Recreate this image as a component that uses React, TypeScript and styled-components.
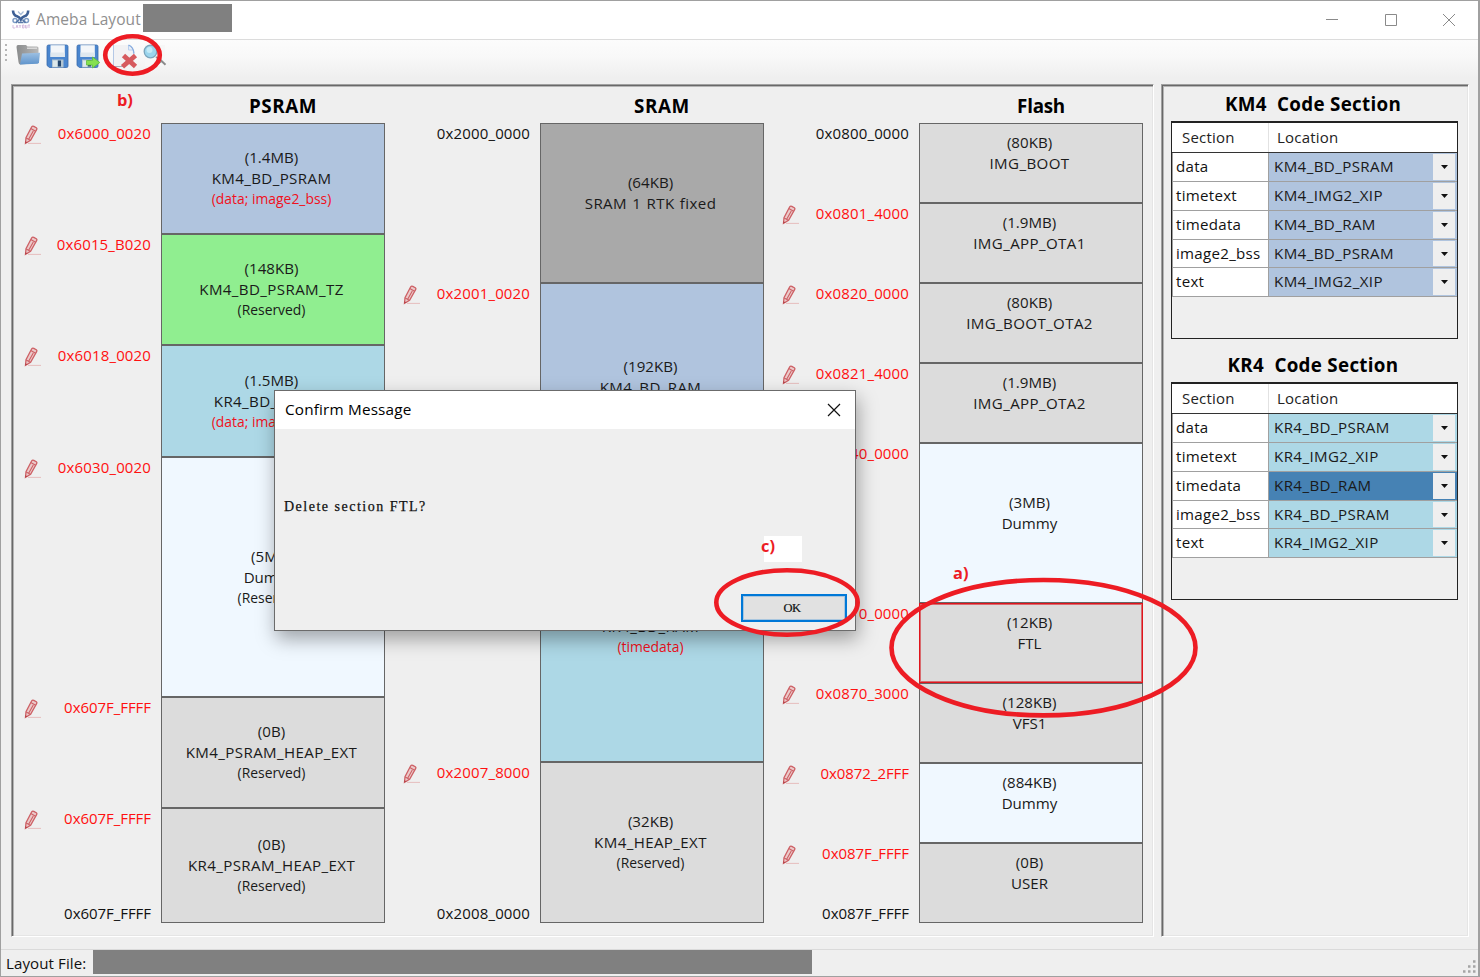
import React from 'react';
import styled, { createGlobalStyle } from 'styled-components';

const Global = createGlobalStyle`
  html, body { margin: 0; padding: 0; overflow: hidden; }
  * { box-sizing: border-box; }
  body { font-family: "Open Sans", "Noto Sans", sans-serif; color: #111; background: #efefef; }
`;

const Window = styled.div`
  position: relative;
  width: 1480px;
  height: 977px;
  display: flex;
  flex-direction: column;
  background: #efefef;
  border: 1px solid #a0a0a0;
  border-right-width: 2px;
  overflow: hidden;
`;

const TitleBar = styled.header`
  height: 38px;
  flex: none;
  display: flex;
  align-items: center;
  background: #fff;
  padding: 0 0 2px 10px;
`;

const AppTitle = styled.span`
  width: 107px;
  margin-left: 5px;
  font-size: 15.5px;
  letter-spacing: 0.08px;
  color: #8f8f8f;
  white-space: nowrap;
`;

const TitleMask = styled.div`
  width: 89px;
  height: 28px;
  margin-top: -2px;
  background: #808080;
`;

const WindowButtons = styled.div`
  margin: 2px 22px 0 auto;
  display: flex;
  gap: 44.5px;
`;

const ToolBar = styled.div`
  height: 45px;
  flex: none;
  display: flex;
  align-items: flex-start;
  padding: 4px 0 0 4px;
  border-top: 1px solid #dcdcdc;
  background: linear-gradient(#fcfcfc, #f8f8f8 40%, #efefef 85%);
`;

const Tool = styled.span<{ $gap: number }>`
  display: flex;
  margin-left: ${(p) => p.$gap}px;
`;

const Main = styled.main`
  flex: none;
  height: 853px;
  display: flex;
  gap: 7px;
  padding-left: 10px;
`;

const Panel = styled.section<{ $w: number }>`
  width: ${(p) => p.$w}px;
  flex: none;
  border: 1px solid;
  border-color: #a0a0a0 #fff #fff #a0a0a0;
  box-shadow: inset 1px 1px 0 #696969, inset 2px 2px 0 #b5b5b5, inset -1px -1px 0 #e5e5e5;
`;

const MemoryPanel = styled(Panel)`
  display: flex;
  gap: 7px;
  padding-left: 1px;
`;

const Column = styled.div`
  width: 372px;
  flex: none;
  display: flex;
  flex-direction: column;
`;

const ColumnTitle = styled.h2<{ $spacing: number }>`
  margin: 0;
  height: 38px;
  padding: 8px 0 0 168px;
  text-align: center;
  font-size: 18.8px;
  letter-spacing: ${(p) => p.$spacing}px;
  line-height: 26px;
  font-weight: 700;
  color: #000;
  white-space: nowrap;
`;

const MemRow = styled.div<{ $h: number }>`
  height: ${(p) => p.$h}px;
  display: flex;
`;

const Side = styled.div`
  width: 148px;
  padding-right: 10px;
  display: flex;
  flex-direction: column;
  justify-content: space-between;
`;

const Address = styled.div<{ $red: boolean; $tight: boolean }>`
  height: 20px;
  display: flex;
  justify-content: flex-end;
  align-items: center;
  font-size: 15px;
  line-height: 20px;
  letter-spacing: ${(p) => (p.$tight ? -0.05 : 0.14)}px;
  color: ${(p) => (p.$red ? '#ff1010' : '#111')};
  white-space: nowrap;
  & > svg { margin: 4px auto 0 11px; }
`;

const Block = styled.div<{ $c: string; $sel: boolean }>`
  width: 224px;
  background: ${(p) => p.$c};
  border: 1px solid ${(p) => (p.$sel ? '#e0141c' : '#666')};
  box-shadow: ${(p) => (p.$sel ? 'inset 0 0 0 1px #d86a6e' : 'none')};
  display: flex;
  flex-direction: column;
  align-items: center;
  justify-content: center;
  padding-right: 3px;
`;

const BlockLine = styled.div<{ $small?: boolean; $red?: boolean; $wide?: boolean }>`
  height: 21px;
  flex: none;
  line-height: ${(p) => (p.$small ? 19 : 21)}px;
  font-size: ${(p) => (p.$small ? 13.9 : 15.1)}px;
  letter-spacing: ${(p) => (p.$wide ? 0.38 : 0)}px;
  word-spacing: ${(p) => (p.$wide ? 1 : 0)}px;
  color: ${(p) => (p.$red ? '#f01020' : '#1a1a1a')};
  white-space: nowrap;
`;

const CodePanel = styled(Panel)`
  padding: 5px 10px 0 9px;
`;

const CodeTitle = styled.h3`
  margin: 0;
  height: 31px;
  padding: 1px 3px 0 0;
  text-align: center;
  font-size: 18.8px;
  letter-spacing: 0.3px;
  line-height: 26px;
  font-weight: 700;
  color: #000;
  white-space: pre;
`;

const Table = styled.div`
  height: 218px;
  margin-bottom: 12px;
  border: 1px solid #222;
  border-top-width: 2px;
`;

const HeadRow = styled.div`
  display: grid;
  grid-template-columns: 97px 1fr;
  height: 30px;
  background: #fff;
  border-bottom: 1px solid #333;
`;

const HeadCell = styled.div`
  padding-left: 10px;
  font-size: 15px;
  letter-spacing: 0.2px;
  line-height: 28px;
  color: #222;
  & + & { margin-left: -1px; border-left: 1px solid #e2e2e2; padding-left: 8px; }
`;

const BodyRow = styled.div`
  display: grid;
  grid-template-columns: 97px 1fr;
  height: 29px;
  &:nth-child(5) { height: 28px; }
`;

const NameCell = styled.div`
  background: #fff;
  border: 1px solid #a0a0a0;
  border-width: 0 1px 1px 1px;
  padding-left: 3px;
  font-size: 15.1px;
  letter-spacing: 0.28px;
  line-height: 27px;
  color: #111;
  white-space: nowrap;
`;

const SelectCell = styled.div<{ $c: string }>`
  display: flex;
  justify-content: space-between;
  background: ${(p) => p.$c};
  border-bottom: 1px solid #a0a0a0;
  padding: 1px 2px 1px 5px;
  font-size: 15.1px;
  letter-spacing: 0.4px;
  line-height: 25px;
  color: #1a1a1a;
`;

const Drop = styled.span`
  width: 22px;
  display: flex;
  align-items: center;
  justify-content: center;
  background: #efefef;
`;

const StatusBar = styled.footer`
  height: 27px;
  margin-top: auto;
  flex: none;
  display: flex;
  border-top: 1px solid #dadada;
  padding-left: 5px;
`;

const StatusLabel = styled.span`
  width: 87px;
  font-size: 15.1px;
  letter-spacing: 0.08px;
  line-height: 27px;
  color: #111;
  white-space: nowrap;
`;

const StatusMask = styled.div`
  width: 719px;
  height: 24px;
  background: #808080;
`;

const Grip = styled.svg`
  margin: 10px 1px 0 auto;
`;

const Dialog = styled.div`
  position: absolute;
  left: 273px;
  top: 389px;
  width: 582px;
  height: 241px;
  display: flex;
  flex-direction: column;
  background: #efefef;
  border: 1px solid #6b6b6b;
  box-shadow: 2px 8px 18px rgba(0, 0, 0, 0.34);
`;

const DialogHead = styled.div`
  height: 38px;
  display: flex;
  align-items: center;
  justify-content: space-between;
  padding: 0 14px 0 10px;
  background: #fff;
  color: #000;
  font-size: 15.3px;
  letter-spacing: 0.17px;
  line-height: 36px;
`;

const DialogHeadText = styled.span`
  margin-top: -2px;
`;

const DialogText = styled.p`
  margin: 0;
  padding: 69px 0 0 9px;
  font-family: "Liberation Serif", serif;
  font-size: 14px;
  letter-spacing: 1.5px;
  line-height: 18px;
  color: #111;
  -webkit-text-stroke: 0.25px #111;
`;

const OkButton = styled.button`
  width: 106px;
  height: 28px;
  margin: auto 8px 8px auto;
  padding: 0 4px 0 0;
  border: 2px solid #0078d7;
  box-shadow: inset 0 0 0 1px #a9c6de;
  background: #e1e1e1;
  font-family: "Liberation Serif", serif;
  font-size: 12.5px;
  letter-spacing: -0.5px;
  color: #111;
  -webkit-text-stroke: 0.2px #111;
`;

const Marks = styled.svg`
  position: absolute;
  left: -1px;
  top: -1px;
`;

const Mark = styled.span<{ $x: number; $y: number }>`
  position: absolute;
  left: ${(p) => p.$x}px;
  top: ${(p) => p.$y}px;
  font-size: 16.4px;
  line-height: 20px;
  font-weight: 700;
  color: #ed1c24;
`;

const Patch = styled.div`
  position: absolute;
  left: 763px;
  top: 535px;
  width: 38px;
  height: 26px;
  background: #fff;
`;

const Pencil = () => (
  <svg width="18" height="20" viewBox="0 0 18 20" fill="none">
    <path d="M1.5 18.3L2 12.8L7.7 1.8Q8.5 .8 9.8 1.4L12.3 2.8Q13.3 3.5 12.6 4.6L6.6 15.3L1.5 18.3Z" stroke="#cd6065" strokeWidth="1.3" fill="#ebcaca" />
    <path d="M6.8 3.6L11.6 6.2M2.2 13L6.3 15.2M9.3 6L4.8 14" stroke="#cd6065" strokeWidth="1.1" />
    <path d="M1.2 16.2L1.2 18.6L3.6 17.6Z" fill="#b5444a" />
    <path d="M4 18.4H17" stroke="#e6bdbd" />
  </svg>
);

const Logo = () => (
  <svg width="20" height="21" viewBox="0 0 20 21" fill="none">
    <path d="M2 1.5Q2.3 6.5 6 7.2Q8.5 8 9.8 10.5Q11 8 13.5 7.2Q17 6.5 17.2 1.5" stroke="#3d5f95" strokeWidth="2.6" />
    <path d="M7 2.5L9.8 5.5L12.5 2.5" stroke="#a9bdd8" strokeWidth="1.2" />
    <circle cx="4" cy="11.5" r="2" stroke="#7f9dc6" strokeWidth="1.5" />
    <circle cx="15.5" cy="11.5" r="2" stroke="#7f9dc6" strokeWidth="1.5" />
    <path d="M5 14L8 10.5M14.5 14L11.5 10.5M7 13.5H12.5" stroke="#5878a8" strokeWidth="1.6" />
    <path d="M2 16V19H4M5 19L6 16L7 19M8 16L9 17.5L10 16M9 17.5V19M11.5 16H13V19H11.5ZM14.5 16V19H16V16M17 16H19M18 16V19" stroke="#d3b7dc" strokeWidth=".9" />
  </svg>
);

const Folder = () => (
  <svg width="26" height="24" viewBox="0 0 26 24">
    <defs>
      <linearGradient id="fold" x2="0" y2="1"><stop stopColor="#9dc0e2" /><stop offset="1" stopColor="#5f94cc" /></linearGradient>
      <linearGradient id="foldBack" x2="1"><stop stopColor="#8a8c8d" /><stop offset="1" stopColor="#b8b8b8" /></linearGradient>
    </defs>
    <path d="M.5 3Q.5 1 2 1H10L11.5 2.5H21Q22.5 2.5 22.5 4V19L4 20.5Q2.8 20 2.5 18Z" fill="url(#foldBack)" />
    <path d="M11 3.5H21V5H11Z" fill="#d8d8d8" />
    <path d="M6 9.5L24 8.7L23 18.3Q22.8 19.6 21.5 19.7L4 20.5Z" fill="url(#fold)" />
  </svg>
);

const Disk = ({ arrow }: { arrow?: boolean }) => (
  <svg width="24" height="26" viewBox="0 0 24 26">
    <path d="M2.5 1H20.5Q22 1 22 2.5V22Q22 23.5 20.5 23.5H3.5L1 21.5V2.5Q1 1 2.5 1Z" fill="#4a86cf" stroke="#3a69a8" strokeWidth=".8" />
    <path d="M4.5 1.2H18.8V13H4.5Z" fill="#f3f6f9" />
    <path d="M4.5 8.5H18.8V13H4.5Z" fill="#dfe8ef" />
    <path d="M6 15.5H17.5V23.4H6Z" fill="#b3c5d1" />
    <path d="M12 16.5H15V22.5H12Z" fill="#24466d" />
    <path d="M7 16.5H11V22.8H7Z" fill="#dde8ea" />
    {arrow && <path d="M10.5 16.5H16.5V13L23.8 18.5L16.5 24V21H10.5Z" fill="#86e04f" stroke="#5fbe3e" strokeWidth=".8" />}
  </svg>
);

const PageDelete = () => (
  <svg width="26" height="26" viewBox="0 0 26 26" fill="none">
    <path d="M1 1H16.5L21.5 6.5V22.5H1Z" fill="#f2f2f4" />
    <path d="M.5 1V22.5" stroke="#b4c8e6" />
    <path d="M15.5 1V6H20.5V10" fill="#e4eefa" stroke="#b9cfee" strokeWidth="1" />
    <path d="M15.5 1Q20.5 3 21 9.5" stroke="#86abdf" strokeWidth="1.3" />
    <path d="M.5 22.5H12" stroke="#a7adba" />
    <path d="M10.5 11.5L22.5 22.5M22.5 11.5L9.5 22.8" stroke="#d65a5e" strokeWidth="4.8" />
  </svg>
);

const Search = () => (
  <svg width="24" height="24" viewBox="0 0 24 24" fill="none">
    <path d="M2 1H22V22H2Z" fill="#f7f7f7" />
    <path d="M13 13L17 15.5L22.5 20.8" stroke="#8b8b8b" strokeWidth="2" />
    <path d="M15 20L19 17" stroke="#8b8b8b" strokeWidth="1.3" />
    <circle cx="7.5" cy="7.5" r="6.3" fill="#9bd5ed" stroke="#7aa5bc" strokeWidth="1.3" />
    <circle cx="6.5" cy="6" r="3" fill="#c4eaf6" />
  </svg>
);

type Mem = { h: number; addr: string; black?: boolean; size: string; name: string; note?: string; noteRed?: boolean; c: string; sel?: boolean; end?: string };

const STEEL = '#b0c4de';
const CYAN = '#add8e6';
const GRAY = '#dcdcdc';
const ICE = '#f0f8ff';

const columns: { title: string; spacing: number; rows: Mem[] }[] = [
  {
    title: 'PSRAM',
    spacing: 0.6,
    rows: [
      { h: 111, addr: '0x6000_0020', size: '(1.4MB)', name: 'KM4_BD_PSRAM', note: '(data; image2_bss)', noteRed: true, c: STEEL },
      { h: 111, addr: '0x6015_B020', size: '(148KB)', name: 'KM4_BD_PSRAM_TZ', note: '(Reserved)', c: '#90ee90' },
      { h: 112, addr: '0x6018_0020', size: '(1.5MB)', name: 'KR4_BD_PSRAM', note: '(data; image2_bss)', noteRed: true, c: CYAN },
      { h: 240, addr: '0x6030_0020', size: '(5MB)', name: 'Dummy', note: '(Reserved)', c: ICE },
      { h: 111, addr: '0x607F_FFFF', size: '(0B)', name: 'KM4_PSRAM_HEAP_EXT', note: '(Reserved)', c: GRAY },
      { h: 115, addr: '0x607F_FFFF', size: '(0B)', name: 'KR4_PSRAM_HEAP_EXT', note: '(Reserved)', c: GRAY, end: '0x607F_FFFF' },
    ],
  },
  {
    title: 'SRAM',
    spacing: 0.6,
    rows: [
      { h: 160, addr: '0x2000_0000', black: true, size: '(64KB)', name: 'SRAM 1 RTK fixed', c: '#a9a9a9' },
      { h: 208, addr: '0x2001_0020', size: '(192KB)', name: 'KM4_BD_RAM', c: STEEL },
      { h: 271, addr: '0x2004_0000', size: '(224KB)', name: 'KR4_BD_RAM', note: '(timedata)', noteRed: true, c: CYAN },
      { h: 161, addr: '0x2007_8000', size: '(32KB)', name: 'KM4_HEAP_EXT', note: '(Reserved)', c: GRAY, end: '0x2008_0000' },
    ],
  },
  {
    title: 'Flash',
    spacing: -0.25,
    rows: [
      { h: 80, addr: '0x0800_0000', black: true, size: '(80KB)', name: 'IMG_BOOT', c: GRAY },
      { h: 80, addr: '0x0801_4000', size: '(1.9MB)', name: 'IMG_APP_OTA1', c: GRAY },
      { h: 80, addr: '0x0820_0000', size: '(80KB)', name: 'IMG_BOOT_OTA2', c: GRAY },
      { h: 80, addr: '0x0821_4000', size: '(1.9MB)', name: 'IMG_APP_OTA2', c: GRAY },
      { h: 160, addr: '0x0840_0000', size: '(3MB)', name: 'Dummy', c: ICE },
      { h: 80, addr: '0x0870_0000', size: '(12KB)', name: 'FTL', c: GRAY, sel: true },
      { h: 80, addr: '0x0870_3000', size: '(128KB)', name: 'VFS1', c: GRAY },
      { h: 80, addr: '0x0872_2FFF', size: '(884KB)', name: 'Dummy', c: ICE },
      { h: 80, addr: '0x087F_FFFF', size: '(0B)', name: 'USER', c: GRAY, end: '0x087F_FFFF' },
    ],
  },
];

const sections = ['data', 'timetext', 'timedata', 'image2_bss', 'text'];
const targets = ['BD_PSRAM', 'IMG2_XIP', 'BD_RAM', 'BD_PSRAM', 'IMG2_XIP'];

function CodeTable({ core, color, active }: { core: string; color: string; active?: string }) {
  return (
    <>
      <CodeTitle>{core + '  Code Section'}</CodeTitle>
      <Table>
        <HeadRow>
          <HeadCell>Section</HeadCell>
          <HeadCell>Location</HeadCell>
        </HeadRow>
        {sections.map((s, i) => (
          <BodyRow key={s}>
            <NameCell>{s}</NameCell>
            <SelectCell $c={s === active ? '#4682b4' : color}>
              {core + '_' + targets[i]}
              <Drop>
                <svg width="7" height="4" viewBox="0 0 7 4"><path d="M0 0H7L3.5 4Z" fill="#111" /></svg>
              </Drop>
            </SelectCell>
          </BodyRow>
        ))}
      </Table>
    </>
  );
}

export default function App() {
  return (
    <>
      <Global />
      <Window>
        <TitleBar>
          <Logo />
          <AppTitle>Ameba Layout</AppTitle>
          <TitleMask />
          <WindowButtons>
            <svg width="14" height="14" viewBox="0 0 14 14"><path d="M1 6.5H13" stroke="#8a8a8a" /></svg>
            <svg width="14" height="14" viewBox="0 0 14 14"><path d="M1.5 1.5H12.5V12.5H1.5Z" stroke="#8a8a8a" fill="none" /></svg>
            <svg width="14" height="14" viewBox="0 0 14 14"><path d="M1 1L13 13M13 1L1 13" stroke="#8a8a8a" /></svg>
          </WindowButtons>
        </TitleBar>
        <ToolBar>
          <svg width="3" height="20" viewBox="0 0 3 20"><path d="M0 1H2M0 6H2M0 11H2M0 16H2" stroke="#b5b5b5" strokeWidth="2" /></svg>
          <Tool $gap={8}><Folder /></Tool>
          <Tool $gap={4}><Disk /></Tool>
          <Tool $gap={6}><Disk arrow /></Tool>
          <Tool $gap={13}><PageDelete /></Tool>
          <Tool $gap={4}><Search /></Tool>
        </ToolBar>
        <Main>
          <MemoryPanel $w={1143}>
            {columns.map((col) => (
              <Column key={col.title}>
                <ColumnTitle $spacing={col.spacing}>{col.title}</ColumnTitle>
                {col.rows.map((r, i) => (
                  <MemRow key={i} $h={r.h}>
                    <Side>
                      <Address $red={!r.black} $tight={r.addr.endsWith('FFF')}>
                        {!r.black && <Pencil />}
                        {r.addr}
                      </Address>
                      {r.end && <Address $red={false} $tight={r.end.endsWith('FFF')}>{r.end}</Address>}
                    </Side>
                    <Block $c={r.c} $sel={!!r.sel}>
                      <BlockLine>{r.size}</BlockLine>
                      <BlockLine $wide={/[_ ]/.test(r.name)}>{r.name}</BlockLine>
                      <BlockLine $small $red={r.noteRed}>{r.note}</BlockLine>
                    </Block>
                  </MemRow>
                ))}
              </Column>
            ))}
          </MemoryPanel>
          <CodePanel $w={308}>
            <CodeTable core="KM4" color={STEEL} />
            <CodeTable core="KR4" color={CYAN} active="timedata" />
          </CodePanel>
        </Main>
        <StatusBar>
          <StatusLabel>Layout File:</StatusLabel>
          <StatusMask />
          <Grip width="14" height="14" viewBox="0 0 14 14">
            <path d="M10 1.5H12.5M5 6.5H7.5M10 6.5H12.5M0 11.5H2.5M5 11.5H7.5M10 11.5H12.5" stroke="#a5a5a5" strokeWidth="2.5" />
          </Grip>
        </StatusBar>
        <Dialog>
          <DialogHead>
            <DialogHeadText>Confirm Message</DialogHeadText>
            <svg width="14" height="14" viewBox="0 0 14 14"><path d="M1 1L13 13M13 1L1 13" stroke="#111" strokeWidth="1.2" /></svg>
          </DialogHead>
          <DialogText>Delete section FTL?</DialogText>
          <OkButton>OK</OkButton>
        </Dialog>
        <Patch />
        <Marks width="1480" height="977" viewBox="0 0 1480 977" fill="none" stroke="#ed1c24" strokeWidth="4.6">
          <ellipse cx="132.5" cy="55" rx="27.3" ry="18.7" />
          <ellipse cx="787" cy="602.5" rx="70.7" ry="32.2" />
          <ellipse cx="1043.5" cy="647.7" rx="152" ry="67.7" />
        </Marks>
        <Mark $x={116} $y={89}>b)</Mark>
        <Mark $x={760} $y={535}>c)</Mark>
        <Mark $x={952} $y={562}>a)</Mark>
      </Window>
    </>
  );
}
